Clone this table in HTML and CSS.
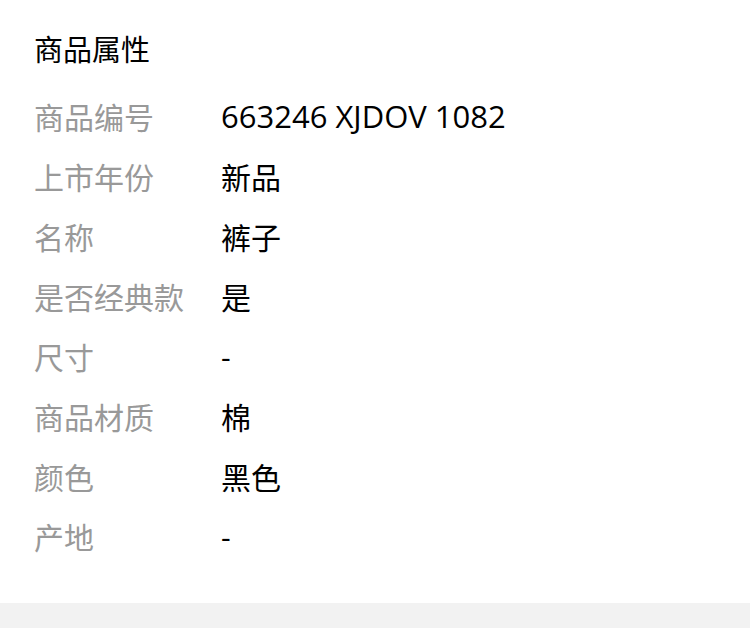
FILE: index.html
```html
<!DOCTYPE html>
<html lang="zh-CN">
<head>
  <meta charset="UTF-8">
  <meta name="viewport" content="width=device-width, initial-scale=1.0">
  <title>商品属性</title>
  <link rel="stylesheet" href="styles.css">
</head>
<body>
  <div class="props">
    <h2 class="props-title">商品属性</h2>
    <div class="row"><span class="label">商品编号</span><span class="value code">663246 XJDOV 1082</span></div>
    <div class="row"><span class="label">上市年份</span><span class="value">新品</span></div>
    <div class="row"><span class="label">名称</span><span class="value">裤子</span></div>
    <div class="row"><span class="label">是否经典款</span><span class="value">是</span></div>
    <div class="row"><span class="label">尺寸</span><span class="value">-</span></div>
    <div class="row"><span class="label">商品材质</span><span class="value">棉</span></div>
    <div class="row"><span class="label">颜色</span><span class="value">黑色</span></div>
    <div class="row"><span class="label">产地</span><span class="value">-</span></div>
  </div>
  <div class="footer-band"></div>
</body>
</html>
```

FILE: styles.css
```css
body {
  margin: 0;
  padding: 0;
  background-color: #fff;
  color: #000;
  font-family: "Open Sans", "Noto Sans CJK SC", sans-serif;
}

.props {
  padding: 28px 34px 37px;
}

.props-title {
  margin: 0 0 14px;
  font-size: 29px;
  font-weight: 400;
  line-height: 44px;
  color: #000;
}

.row {
  display: flex;
  align-items: center;
  height: 60px;
}

.label {
  width: 187px;
  flex-shrink: 0;
  font-size: 30px;
  color: #999;
}

.value {
  font-size: 30px;
  color: #000;
}

.code {
  font-size: 31px;
}

.footer-band {
  height: 40px;
  background-color: #f2f2f2;
}
```
